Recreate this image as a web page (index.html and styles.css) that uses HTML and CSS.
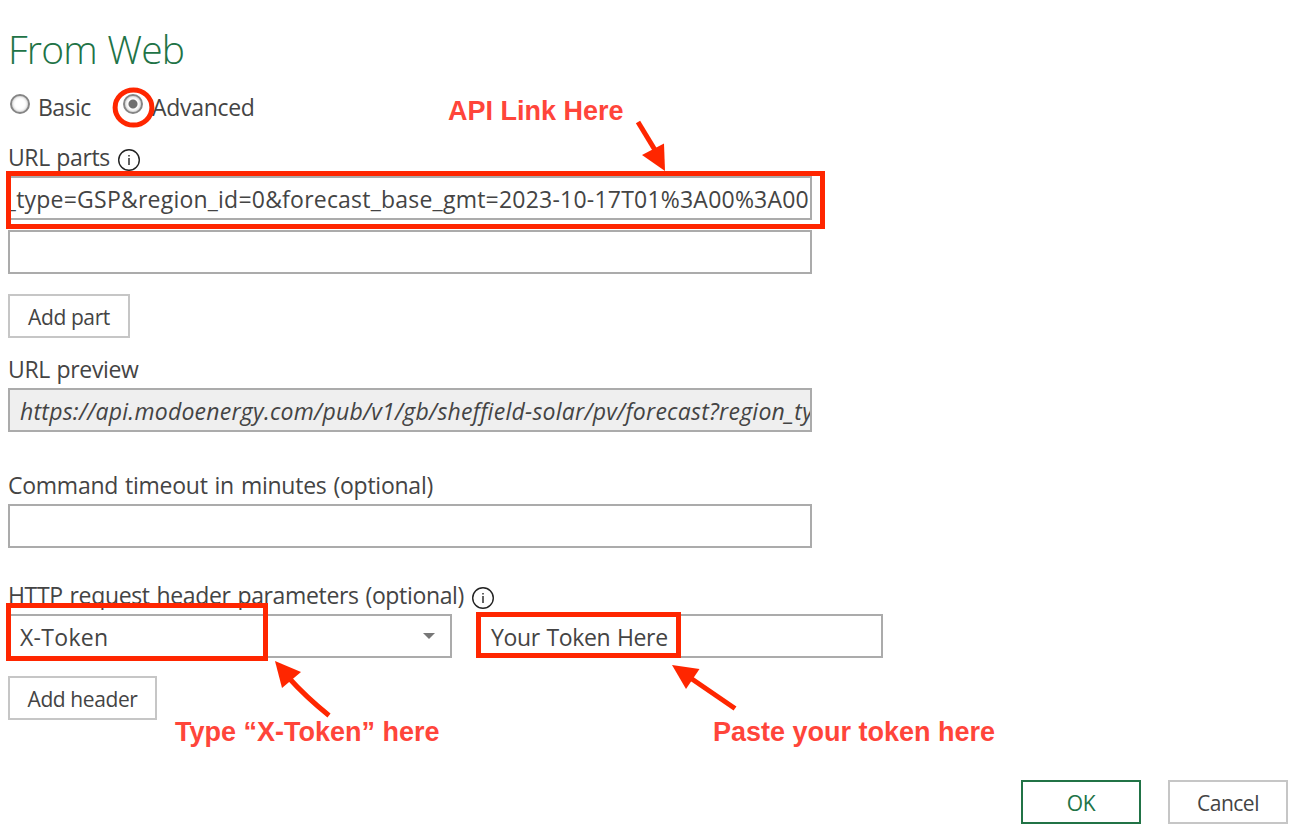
FILE: index.html
```html
<!DOCTYPE html>
<html lang="en">
<head>
    <meta charset="UTF-8">
    <meta name="viewport" content="width=device-width, initial-scale=1.0">
    <title>From Web</title>
    <link rel="stylesheet" href="styles.css">
</head>
<body>

    <div class="dialog">
        <h1 class="title">From Web</h1>

        <div class="radio-row">
            <label class="radio-option basic"><span class="radio"></span><span>Basic</span></label>
            <label class="radio-option advanced"><span class="radio checked"></span><span>Advanced</span></label>
        </div>

        <div class="label label-parts">
            <span>URL parts</span>
            <svg class="info" viewBox="0 0 24 24"><circle cx="12" cy="12" r="10.3"/><path d="M12 10v7M12 7v1.6"/></svg>
        </div>
        <div class="field scrolled"><span>_type=GSP&amp;region_id=0&amp;forecast_base_gmt=2023-10-17T01%3A00%3A00</span></div>
        <div class="field second"></div>
        <button class="btn add-part">Add part</button>

        <div class="label label-preview"><span>URL preview</span></div>
        <div class="field preview"><span>https://api.modoenergy.com/pub/v1/gb/sheffield-solar/pv/forecast?region_ty</span></div>

        <div class="label label-timeout"><span>Command timeout in minutes (optional)</span></div>
        <div class="field"></div>

        <div class="label label-http">
            <span>HTTP request header parameters (optional)</span>
            <svg class="info" viewBox="0 0 24 24"><circle cx="12" cy="12" r="10.3"/><path d="M12 10v7M12 7v1.6"/></svg>
        </div>
        <div class="header-row">
            <div class="field select">
                <span>X-Token</span>
                <svg class="caret" viewBox="0 0 12 6"><path d="M0 0h12L6 6z"/></svg>
            </div>
            <div class="field value"><span>Your Token Here</span></div>
        </div>
        <button class="btn add-header">Add header</button>

        <div class="footer">
            <button class="btn ok">OK</button>
            <button class="btn cancel">Cancel</button>
        </div>
    </div>

    <!-- Red markers over the form -->
    <svg class="marks" viewBox="0 0 1290 836">
        <g class="outline">
            <ellipse cx="133.5" cy="107.5" rx="18.4" ry="17.6"/>
            <rect x="8.5" y="173.5" width="814" height="53"/>
            <rect x="8.5" y="605.5" width="257" height="53"/>
            <rect x="478.5" y="614.5" width="200" height="41"/>
            <path d="M638 122l17 28"/>
            <path d="M329 715.5Q306 697 288 677"/>
            <path d="M735 708.5L689 677"/>
        </g>
        <path class="head" d="M665 171L642 155L664 143.5z"/>
        <path class="head" d="M275 661L301 672L282 688z"/>
        <path class="head" d="M672 665L699.5 669L686 689z"/>
    </svg>
    <div class="note note-api">API Link Here</div>
    <div class="note note-type">Type “X-Token” here</div>
    <div class="note note-paste">Paste your token here</div>

</body>
</html>
```
FILE: styles.css
```css
* {
    box-sizing: border-box;
}
body {
    margin: 0;
    position: relative;
    width: 1290px;
    height: 836px;
    overflow: hidden;
    background-color: #fff;
    color: #444;
    font-family: "Open Sans", "Noto Sans", sans-serif;
    font-size: 23px;
    line-height: 28px;
    white-space: nowrap;
}
.dialog {
    display: flex;
    flex-direction: column;
    align-items: flex-start;
    padding: 23px 2px 0 8px;
}

/* Title and radios */
.title {
    margin: 0;
    height: 52px;
    line-height: 51px;
    font-size: 39px;
    font-weight: 300;
    letter-spacing: -0.8px;
    word-spacing: 1px;
    color: #217346;
}
.radio-row {
    display: flex;
    height: 36px;
    margin-top: 15px;
    padding-left: 2px;
}
.radio-option {
    display: flex;
    align-items: flex-start;
}
.basic {
    width: 113px;
    letter-spacing: -0.55px;
}
.advanced {
    letter-spacing: -0.3px;
}
.radio {
    flex: none;
    width: 20px;
    height: 20px;
    margin: 4px 8px 0 0;
    border: 2px solid #858585;
    border-radius: 50%;
    background-color: #fff;
    box-shadow: inset 0 0 3px #aaa;
}
.radio.checked {
    background-image: radial-gradient(circle, #707070 0 4px, transparent 5px);
}
.advanced .radio {
    margin-right: 9px;
}
.radio-option > span:last-child {
    margin-top: 3px;
}

/* Labels */
.label {
    display: flex;
    height: 30px;
    margin-bottom: 3px;
}
.label-parts {
    margin-top: 17px;
    letter-spacing: -0.4px;
    word-spacing: 1px;
}
.label-preview {
    margin-top: 17px;
    letter-spacing: -0.35px;
    word-spacing: 1px;
}
.label-timeout {
    margin-top: 39px;
    letter-spacing: -0.25px;
    word-spacing: 1.2px;
}
.label-http {
    margin-top: 33px;
    letter-spacing: -0.35px;
    word-spacing: 1.2px;
}
.info {
    width: 24px;
    height: 24px;
    margin: 5px 0 0 7px;
    fill: none;
    stroke: #222;
    stroke-width: 1.4;
}

/* Text fields */
.field {
    width: 804px;
    height: 44px;
    border: 2px solid #ababab;
    padding: 7px 10px;
    overflow: hidden;
}
.scrolled {
    display: flex;
    justify-content: flex-end;
    padding: 7px 1px;
    letter-spacing: 0.22px;
}
.second {
    margin-top: 10px;
}
.preview {
    background-color: #efefef;
    font-style: italic;
    letter-spacing: 0.25px;
}
.header-row {
    display: flex;
    gap: 27px;
}
.select {
    display: flex;
    justify-content: space-between;
    width: 444px;
    padding-right: 15px;
    letter-spacing: 0.3px;
}
.caret {
    width: 12px;
    height: 6px;
    margin-top: 10px;
    fill: #777;
}
.value {
    width: 404px;
    letter-spacing: -0.35px;
    word-spacing: 1px;
}

/* Buttons */
.btn {
    width: 120px;
    height: 44px;
    padding: 2px 0 0;
    border: 2px solid #c6c6c6;
    background-color: #fff;
    color: #444;
    font-family: inherit;
    font-size: 21px;
    line-height: 30px;
    letter-spacing: -0.4px;
}
.add-part {
    width: 122px;
    margin-top: 20px;
}
.add-header {
    width: 149px;
    margin-top: 18px;
}
.ok {
    border-color: #217346;
    color: #217346;
}
.cancel {
    letter-spacing: -0.5px;
}
.footer {
    display: flex;
    align-self: flex-end;
    gap: 27px;
    margin-top: 60px;
}

/* Red markers */
.marks {
    position: absolute;
    left: 0;
    top: 0;
    width: 1290px;
    height: 836px;
}
.outline {
    fill: none;
    stroke: #ff2600;
    stroke-width: 5;
}
.head {
    fill: #ff2600;
}
.note {
    position: absolute;
    color: #ff453a;
    font-family: "Liberation Sans", Arial, sans-serif;
    font-size: 27px;
    font-weight: bold;
    line-height: 30px;
}
.note-api {
    left: 448px;
    top: 96px;
}
.note-type {
    left: 175px;
    top: 717px;
}
.note-paste {
    left: 713px;
    top: 717px;
}
```
